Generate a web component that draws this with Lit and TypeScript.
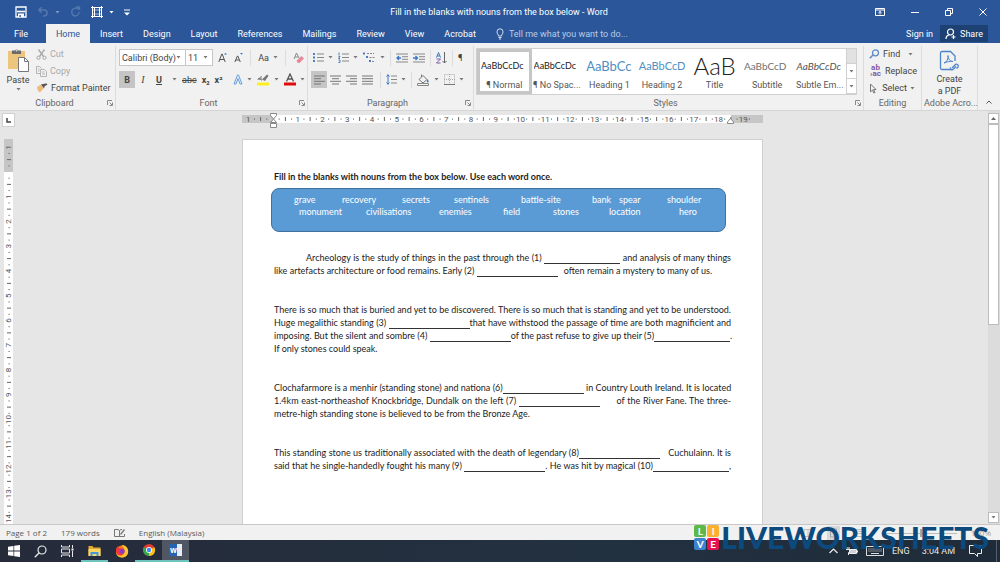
import { LitElement, html, svg, css } from "lit";
import { customElement } from "lit/decorators.js";
import { classMap } from "lit/directives/class-map.js";

const caret = html`<svg class="caret" viewBox="0 0 5 3" width="5" height="3"><path d="M.500 0h4L2.500 2.500z" fill="#777" /></svg>`;
const launcher = html`<svg viewBox="0 0 6 6" width="6" height="6" fill="none" stroke="#888"><path d="M.5 5V.5H5M2.5 2.5L5 5M5.5 2.5v3h-3" /></svg>`;

const icon = (w: number, h: number, body: unknown) =>
  html`<svg viewBox="0 0 ${w} ${h}" width=${w} height=${h} fill="none" aria-hidden="true">${body}</svg>`;

const icons = {
  save: icon(12, 12, svg`<path d="M1 1h10v10H1z" stroke="#fff" stroke-width="1.3"/><path d="M2 5.5h8" stroke="#fff" stroke-width="1.6"/><path d="M3 7.5h6V11H3z" fill="#fff"/><path d="M4.4 9h1.4v2H4.4z" fill="#2b579a"/>`),
  undo: icon(12, 12, svg`<path d="M2 4h5a3 3 0 010 6H6M4.600 1.200L1.800 4l2.800 2.800" stroke="#5577ae" stroke-width="1.500"/>`),
  redo: icon(11, 12, svg`<path d="M8.500 3.200A4 4 0 105 10a4 4 0 004-4M6.500 1h3v3" stroke="#5577ae" stroke-width="1.400"/>`),
  frame: icon(12, 12, svg`<path d="M0 1.500h12M0 10.500h12M1.500 0v12M10.500 0v12M3.500 1v10M8.500 1v10" stroke="#fff"/><path d="M2 4h8M2 8h8" stroke="#fff" stroke-opacity=".6"/>`),
  more: icon(6, 7, svg`<path d="M0 1h6" stroke="#fff"/><path d="M0 3.500h6L3 6.500z" fill="#fff"/>`),
  display: icon(10, 8, svg`<path d="M.5.5h9v7h-9zM.5 2h9M5 6.500V3.500M3.500 4.800L5 3.400l1.500 1.400" stroke="#fff"/>`),
  min: icon(8, 8, svg`<path d="M0 4.500h8" stroke="#fff"/>`),
  restore: icon(8, 8, svg`<path d="M.5 2.500h5v5h-5zM2.500 2.500v-2h5v5h-2" stroke="#fff"/>`),
  close: icon(8, 8, svg`<path d="M.5.500l7 7M7.500.500l-7 7" stroke="#fff"/>`),
  bulb: icon(8, 12, svg`<path d="M2.500 8C2.500 6.500 1 6 1 3.800a3 3 0 016 0C7 6 5.500 6.500 5.500 8zM2.500 9.500h3M3 11h2" stroke="#d5e0f1"/>`),
  person: icon(11, 12, svg`<circle cx="5.500" cy="4" r="3" stroke="#fff" stroke-width="1.200"/><path d="M1 11c0-2.500 1.500-4 3.500-4M8.500 7v4M6.500 9h4" stroke="#fff" stroke-width="1.200"/>`),
  paste: icon(22, 23, svg`<path d="M1 2h17v18H1z" fill="#edc57d"/><path d="M5 1.500h3a1.700 1.700 0 013 0h3V5H5z" fill="#6b6b6b"/><circle cx="9.500" cy="1.800" r=".8" fill="#f1f1f1"/><path d="M11.500 8.500h6l4 4v10h-10z" fill="#fff" stroke="#777"/><path d="M17.500 8.500v4h4" stroke="#777"/>`),
  cut: icon(11, 11, svg`<path d="M2.500.500l5 7M8.500.500l-5 7" stroke="#a8a8a8" stroke-width="1.300"/><circle cx="2.500" cy="8.800" r="1.600" stroke="#a8a8a8"/><circle cx="8.500" cy="8.800" r="1.600" stroke="#a8a8a8"/>`),
  copy: icon(11, 11, svg`<path d="M4 7.500H.5v-7h3l2 2M4.500 3.500h4l2 2v5h-6zM2 3h1.500M2 5h1.500M6 6h2.500M6 8h3" stroke="#b5b5b5"/>`),
  brush: icon(12, 10, svg`<path d="M1 4l4-2.500 2.500 4L4 9.500C2 8.500 1 6.500 1 4z" fill="#eebb79"/><path d="M5 1.500L9.500.500 8 5.500z" fill="#555"/><path d="M8 2.500l3-1.500" stroke="#555" stroke-width="1.600"/>`),
  grow: icon(9, 11, svg`<path d="M.8 10L3.800 2h.4l3 8M1.900 7.500h4.200" stroke="#555"/><path d="M6 2.500L7.500.800 9 2.500z" fill="#3b78c3"/>`),
  shrink: icon(9, 11, svg`<path d="M.8 10L3.400 4h.4l2.500 6M1.900 8h3.400" stroke="#555"/><path d="M6 1L7.500 2.700 9 1z" fill="#3b78c3"/>`),
  eraser: icon(11, 12, svg`<path d="M1 7l2.500-6L6 6M2 5h3" stroke="#8b8b8b"/><path d="M3.500 8.500L8.500 4 11 6.500 6.500 11H4.800z" fill="#e9899d"/>`),
  outlineA: icon(10, 11, svg`<path d="M1 10L4.500 1h1L9 10H7L5 4.500 3 10z" stroke="#6aa0d8" fill="#e8f2fc"/>`),
  marker: icon(13, 13, svg`<path d="M5 6.500l5-5 1.500 1.200L8 8z" fill="#777"/><path d="M1 7c0-2 2-2 2 0V4.500M1 5.500h2M4 3v4h1" stroke="#777"/><path d="M0 9.500h12v3H0z" fill="#ffee1e"/>`),
  fontA: icon(12, 13, svg`<path d="M2.500 8.500L6 1l3.500 7.500M3.600 6h4.800" stroke="#555" stroke-width="1.300"/><path d="M0 9.500h12v3H0z" fill="#e00b0b"/>`),
  bullets: icon(11, 11, svg`<path d="M0 1h2v2H0zM0 4.500h2v2H0zM0 8h2v2H0z" fill="#4a7ebd"/><path d="M4 2h7M4 5.500h7M4 9h7" stroke="#888"/>`),
  numbers: icon(11, 11, svg`<path d="M1 .5v3M.5 4.500H2L.5 6.500H2M.5 8H2v2.500H.5" stroke="#4a7ebd"/><path d="M4 2h7M4 5.500h7M4 9h7" stroke="#888"/>`),
  levels: icon(13, 11, svg`<path d="M0 .500h2v2H0zM3 4h2v2H3zM6 8h2v2H6z" fill="#4a7ebd"/><path d="M4 1.500h7M6.500 5.500h5M9 9.500h3" stroke="#888" stroke-dasharray="2 1"/>`),
  outdent: icon(12, 10, svg`<path d="M0 1h12M6 3.700h6M6 6.300h6M0 9h12" stroke="#888"/><path d="M5 5H1M3 3L1 5l2 2" stroke="#3b78c3" stroke-width="1.300"/>`),
  indent: icon(12, 10, svg`<path d="M0 1h12M6 3.700h6M6 6.300h6M0 9h12" stroke="#888"/><path d="M0 5h4M2.500 3l2 2-2 2" stroke="#3b78c3" stroke-width="1.300"/>`),
  sort: icon(11, 12, svg`<path d="M.5 5.500L2.500.500l2 5M1.200 4h2.500" stroke="#3b78c3"/><path d="M.500 7h4l-4 4h4" stroke="#7a5ba6"/><path d="M8.500 0v11M6.500 9l2 2 2-2" stroke="#666"/>`),
  left: icon(11, 10, svg`<path d="M0 1h11M0 3.700h7M0 6.300h11M0 9h7" stroke="#777"/>`),
  center: icon(11, 10, svg`<path d="M0 1h11M2 3.700h7M0 6.300h11M2 9h7" stroke="#777"/>`),
  right: icon(11, 10, svg`<path d="M0 1h11M4 3.700h7M0 6.300h11M4 9h7" stroke="#777"/>`),
  justify: icon(11, 10, svg`<path d="M0 1h11M0 3.700h11M0 6.300h11M0 9h11" stroke="#777"/>`),
  spacing: icon(11, 11, svg`<path d="M2 .5v10M.5 2.500L2 .800l1.500 1.700M.5 8.500L2 10.200l1.500-1.700" stroke="#3b78c3"/><path d="M5 2h6M5 5.500h6M5 9h6" stroke="#888"/>`),
  bucket: icon(13, 12, svg`<path d="M2 5.500L6 1.500l4 4-4 3.500zM4.500 3V.500" stroke="#777"/><path d="M10.500 5c1.500 2 1.500 3.500.3 3.500S9.500 7 10.500 5z" fill="#3b78c3"/><path d="M.5 9.500h11v2H.5z" stroke="#888"/>`),
  borders: icon(11, 11, svg`<path d="M.5.500h10v10H.5zM5.500 0v11M0 5.500h11" stroke="#aaa" stroke-dasharray="1 1"/><path d="M0 10.500h11" stroke="#777"/>`),
  find: icon(11, 10, svg`<circle cx="6.500" cy="3.800" r="3" stroke="#5f8ac4" stroke-width="1.300"/><path d="M4 6L.8 9.200" stroke="#5f8ac4" stroke-width="1.600"/>`),
  arrow: icon(8, 11, svg`<path d="M1.500 1l5.500 5.500H4.500L6 9.500l-1.200.500L3.500 7 1.500 8.800z" stroke="#777"/>`),
  pdf: icon(21, 22, svg`<path d="M12 19.500H3a1.500 1.500 0 01-1.500-1.500V3A1.500 1.500 0 013 1.500h8.500L16 6v5" stroke="#4c84c9" stroke-width="1.300"/><path d="M5 13c3-1 4.500-4.500 4-7.500 0 3.500 2 6 5 6-3-.500-6.500.500-9 1.500z" stroke="#4c84c9"/><path d="M12 17l3-3a1.700 1.700 0 013 2l-1.500 1.500M16 15.500l-3 3a1.700 1.700 0 01-2.500-2" transform="translate(1 1)" stroke="#4c84c9" stroke-width="1.300"/>`),
  proof: icon(11, 10, svg`<path d="M5 8.500H.5v-7H4l1.500 1V9M5.500 2.500L7 1.500h1M6 8.500h4.500V6" stroke="#777"/><path d="M6.500 6.500l4-5" stroke="#777" stroke-width="1.300"/>`),
  views: icon(160, 14, svg`<path d="M1 3.500h8v7H1zM5 3.500v7M53.500 3.500h9v7h-9zM55 5.500h6M55 7.500h6" stroke="#999"/><path d="M24 0h13v14H24z" fill="#c6c6c6"/><path d="M27.500 3h6v8h-6z" stroke="#777"/><path d="M82 7.500h72" stroke="#999"/><path d="M117 3h2v8h-2z" fill="#777"/>`),
  start: icon(12, 12, svg`<path d="M0 1.700L5.500.900v4.700H0zM6.200.800L12 0v5.600H6.200zM0 6.400h5.500v4.700L0 10.300zM6.200 6.400H12V12l-5.800-.800z" fill="#fff"/>`),
  search: icon(13, 13, svg`<circle cx="8" cy="5" r="4" stroke="#e8e8e8" stroke-width="1.200"/><path d="M5.200 7.800L.8 12.200" stroke="#e8e8e8" stroke-width="1.400"/>`),
  tasks: icon(13, 12, svg`<path d="M.5 0v2h8V0M.5 12v-2h8v2M.5 4h8v4h-8z" stroke="#e8e8e8"/><path d="M11.500 0v3M11.500 6v6" stroke="#e8e8e8"/><path d="M10.500 3.500h2v2h-2z" fill="#fff"/>`),
  explorer: icon(13, 11, svg`<path d="M.5 1h4l1 1.500H12.500V11H.5z" fill="#e7a92b"/><path d="M.5 4h12v7H.5z" fill="#fbd667"/><path d="M2.500 11V7h8v4h-2V9h-4v2z" fill="#4595dc"/>`),
  firefox: icon(14, 14, svg`<circle cx="7" cy="7.500" r="6" fill="#ff7a18"/><path d="M7 1.500c-1-.500 3-1.500 5.500 3 2 4-.500 9-5.500 9-4 0-6-3-6-6 1 3 4 4.500 6.500 3.500 3-1.500 3-6-.500-9.500z" fill="#ffc62e"/><circle cx="6.800" cy="7.200" r="2.800" fill="#8a3bc4"/><path d="M1 7c0-3 1-4 2-5l1 2 2.500.500L4.500 6.500 5 9l3 1.500C5 13 1 11 1 7z" fill="#f8333d"/>`),
  chrome: icon(14, 14, svg`<circle cx="7" cy="7" r="6" fill="#e33b2e"/><path d="M7 7l5.400-2.800A6 6 0 017 13z" fill="#fbc116"/><path d="M7 7v6A6 6 0 011.700 4.200z" fill="#2da94f"/><circle cx="7" cy="7" r="3" fill="#fff"/><circle cx="7" cy="7" r="2.200" fill="#4285f4"/>`),
  up: icon(9, 6, svg`<path d="M.5 5l4-4 4 4" stroke="#eee" stroke-width="1.200"/>`),
  battery: icon(12, 8, svg`<path d="M3.500 2.500h7v4h-7z" stroke="#eee" fill="#cfd3d8"/><path d="M11 3.500h1v2h-1z" fill="#eee"/><path d="M1 0v2M3 0v2M0 2.500h4V4L2.500 5.500V8" stroke="#eee"/>`),
  keyboard: icon(18, 10, svg`<path d="M.5.500h17v9H.5z" stroke="#ddd"/><path d="M2.500 3h13M2.500 5h13" stroke="#ddd" stroke-dasharray="1 1"/><path d="M5 7.500h8" stroke="#ddd"/>`),
  note: icon(13, 12, svg`<path d="M.500 .500h12v8H8.500v3L5.500 8.500h-5z" stroke="#eee"/>`),
};

@customElement("app-root")
export class AppRoot extends LitElement {
  static styles = css`
    :host { display: flex; flex-direction: column; position: relative; height: 100vh; overflow: hidden; font: 9px/12px Roboto, "Open Sans", sans-serif; color: #444; background: #e6e6e6; }
    * { box-sizing: border-box; }
    svg { display: block; flex: none; }
    button, select, input { font: inherit; color: inherit; border: 0; background: none; margin: 0; padding: 0; border-radius: 0; }
    button { display: flex; align-items: center; justify-content: center; white-space: nowrap; }
    .title { display: grid; grid-template-columns: 1fr auto 1fr; align-items: center; height: 24px; flex: none; background: #2b579a; color: #fff; padding-right: 2px; }
    .quick { display: flex; align-items: center; padding-left: 15px; gap: 10px; }
    .quick .pair { gap: 6px; }
    .quick .caret path { fill: #fff; }
    .dim { opacity: .4; }
    .window { display: flex; justify-content: flex-end; gap: 26px; padding-right: 11px; }
    .tabs { display: flex; align-items: stretch; height: 19px; flex: none; background: #2b579a; color: #fff; padding-right: 12px; }
    .tabs button { padding: 0 10px; }
    .tabs .file { width: 46px; padding: 0 4px 0 0; }
    .tabs .active { background: #f1f1f1; color: #2b579a; width: 44px; }
    .tabs .tell { color: #b9cbe6; gap: 5px; }
    .tabs .push { margin-left: auto; padding: 0 7px; }
    .tabs .share { background: #1e4173; padding: 0 5px; gap: 4px; margin: 1px 0; }
    .ribbon { display: flex; height: 68px; flex: none; background: #f1f1f1; border-bottom: 1px solid #d5d5d5; padding-top: 3px; }
    .group { display: flex; flex-direction: column; border-right: 1px solid #dcdcdc; flex: none; }
    .body { flex: 1; display: flex; }
    .rows { flex-direction: column; padding: 3px 3px 0; gap: 5px; }
    .row { display: flex; align-items: center; height: 17px; gap: 5px; }
    .foot { display: flex; align-items: center; height: 13px; color: #666; padding: 0 2px 2px; }
    .foot span { flex: 1; text-align: center; white-space: nowrap; }
    .clip { width: 116px; }
    .font { width: 192px; }
    .para { width: 166px; }
    .styles { flex: 1 1 0; min-width: 0; }
    .edit { width: 58px; }
    .adobe { width: 56px; }
    .paste { flex-direction: column; justify-content: flex-start; width: 36px; gap: 2px; padding-top: 3px; }
    .list { display: flex; flex-direction: column; gap: 5px; padding-top: 2px; align-items: flex-start; }
    .edit .list { padding-left: 5px; }
    .list button { gap: 3px; height: 12px; }
    .off { color: #a8a8a8; }
    .combo { display: flex; align-items: center; height: 17px; background: #fff; border: 1px solid #c6c6c6; padding: 0 4px 0 2px; }
    .combo select { appearance: none; flex: 1; min-width: 0; height: 15px; }
    .family { width: 69px; }
    .size { width: 31px; margin-left: -6px; }
    .pair { gap: 4px; }
    .sep { width: 1px; height: 16px; background: #dcdcdc; }
    .wide { gap: 7px; }
    .lists { padding-left: 2px; }
    .tools { display: flex; }
    .tool { width: 16px; height: 17px; }
    .on { background: #c5c5c5; }
    .b { font-weight: 700; }
    .i { font: italic 10px "Liberation Serif", serif; }
    .u { text-decoration: underline; font-weight: 700; }
    .s { text-decoration: line-through; }
    .gallery { display: flex; flex: 1; margin: 2px 6px 2px 2px; background: #fff; border: 1px solid #d0d0d0; min-width: 0; }
    .style { flex: 1 1 0; min-width: 0; flex-direction: column; justify-content: flex-end; overflow: hidden; padding: 0 3px 3px; color: #555; }
    .style.chosen { border: 3px solid #c6c6c6; padding: 0 1px; margin-right: -1px; }
    .sample { display: flex; align-items: center; justify-content: flex-start; height: 26px; width: 100%; overflow: hidden; color: #222; font-family: Lato, sans-serif; font-size: 9px; line-height: 26px; }
    .h1 { color: #4f8fc4; font-size: 13px; }
    .h2 { color: #4f8fc4; font-size: 11px; }
    .big { font-size: 24px; font-weight: 300; justify-content: center; }
    .sub { color: #707070; font-size: 10px; }
    .em { color: #555; font-style: italic; font-size: 10px; }
    .scroller { display: flex; flex-direction: column; width: 10px; border-left: 1px solid #d0d0d0; flex: none; }
    .scroller button { flex: 1; border-bottom: 1px solid #d0d0d0; }
    .scroller .none { background: #e1e1e1; }
    .swap { color: #8058a0; font-weight: 700; font-size: 8px; line-height: 6px; display: block; width: 13px; }
    .pdf { flex-direction: column; justify-content: flex-start; gap: 1px; width: 100%; padding-top: 4px; }
    .collapse { flex: none; width: 22px; align-self: flex-end; height: 16px; }
    .work { flex: 1; display: flex; min-height: 0; overflow: hidden; }
    .side { width: 18px; flex: none; overflow: hidden; padding: 2px 0 0 2px; }
    .tabstop { width: 13px; height: 14px; background: #fff; border: 1px solid #d0d0d0; }
    .side .vr { margin: 12px 0 0 2px; }
    .canvas { flex: 1; display: flex; flex-direction: column; align-items: center; overflow: hidden; padding: 2px 1px 0 0; }
    .page { width: 521px; flex: 1 0 auto; margin-top: 11px; background: #fff; border: 1px solid #cfcfcf; border-bottom: 0; padding: 30px 31px 0; font: 9px/13px Lato, sans-serif; color: #1c1c1c; }
    .page h1 { margin: 0; font: inherit; font-weight: 700; }
    .bank { height: 44px; margin: 5px 5px 19px -3px; background: #5b9bd5; border: 1px solid #41719c; border-radius: 8px; color: #fff; padding: 5px 0 0 22px; line-height: 12px; }
    .words { display: grid; white-space: nowrap; }
    .w1 { grid-template-columns: 48px 60px 52px 67px 71px 27px 48px auto; }
    .w2 { grid-template-columns: 67px 73px 64px 50px 56px 70px auto; padding-left: 5px; }
    .text { margin: 0 0 26px; }
    .line { display: block; height: 13px; white-space: nowrap; text-align: justify; text-align-last: justify; }
    .line.last { text-align-last: left; }
    .line.first { padding-left: 32px; }
    .blank { width: 81px; height: 11px; border-bottom: 1px solid #333; vertical-align: baseline; }
    .tight { width: 76px; }
    .far { margin-right: 14px; }
    .near { margin-right: 6px; }
    .bar { width: 12px; flex: none; display: flex; flex-direction: column; background: #dcdcdc; padding: 2px 1px 1px 0; }
    .bar button { height: 11px; background: #fff; border: 1px solid #bdbdbd; flex: none; }
    .thumb { background: #fff; border: 1px solid #bdbdbd; height: 49%; }
    .bar .end { margin-top: auto; }
    .status { display: flex; align-items: center; height: 16px; flex: none; background: #f1f1f1; border-top: 1px solid #c8c8c8; color: #5a5a5a; padding: 0 9px 0 6px; gap: 14px; font: 8px/12px "Open Sans", sans-serif; }
    .zoom { margin-left: auto; display: flex; align-items: center; gap: 8px; opacity: .6; }
    .task { display: flex; align-items: stretch; height: 22px; flex: none; background: linear-gradient(90deg, #262b3a, #223140 60%, #1f2b39); color: #e6e6e6; padding-right: 3px; }
    .task button { width: 27px; }
    .task .run { border-bottom: 2px solid #6fc3bd; }
    .task .front { background: #505662; }
    .task .word { width: 13px; height: 12px; background: linear-gradient(90deg, #2563b4 62%, #e4edf8 62%); color: #fff; font: 700 8px/12px "Open Sans", sans-serif; text-align: left; padding-left: 1px; }
    .tray { margin-left: auto; display: flex; align-items: center; gap: 8px; border-right: 1px solid #56606c; padding-right: 14px; }
    .tray .clock { margin: 0 6px 0 4px; }
    .mark { position: absolute; right: 11px; bottom: 12px; display: flex; align-items: center; gap: 2px; pointer-events: none; }
    .tiles { display: grid; grid-template-columns: 12px 12px; grid-auto-rows: 12px; gap: 1px; font: 700 10px/12px Lato, sans-serif; color: #fff; text-align: center; }
    .tile { border-radius: 2px; }
    .green { background: #5cb947; } .yellow { background: #fbb12f; } .blue { background: #3b82d0; } .red { background: #e6124f; }
    .name { font: 900 30px/26px Lato, sans-serif; color: #0c4a7d; }
  `;

  private horizontalRuler() {
    const unit = 24.75, zero = 31;
    const marks = [-1, ...Array.from({ length: 19 }, (_, i) => i + 1)];
    return html`<svg viewBox="0 0 521 15" width="521" height="15" font-size="8" fill="#555">
      <path d="M0 2h521v8H0z" fill="#fff" /><path d="M0 2h31v8H0zM489 2h32v8h-32z" fill="#c6c6c6" />
      ${marks.map((n) => svg`<text x=${zero + n * unit} y="9" text-anchor="middle">${Math.abs(n)}</text>`)}
      ${Array.from({ length: 83 }, (_, i) => i - 5).filter((q) => q % 4 !== 0).map((q) => {
        const x = zero + (q * unit) / 4;
        if (x < 2 || x > 519) return null;
        return svg`<path d=${q % 2 === 0 ? `M${x} 4v4` : `M${x} 5.500v1.200`} stroke="#666" />`;
      })}
      <path d="M28.500.500h6v2l-3 3.500 3 3.500h-6l3-3.500-3-3.500zM28.500 10.500h6v4h-6zM485.500 10.500v-1.500l3-3.500 3 3.500v1.500z" fill="#fff" stroke="#888" />
    </svg>`;
  }

  private verticalRuler() {
    const unit = 24.75, zero = 33;
    return html`<svg class="vr" viewBox="0 0 9 400" width="9" height="400" font-size="8" fill="#555">
      <path d="M0 0h9v400H0z" fill="#fff" /><path d="M0 0h9v33H0z" fill="#c6c6c6" />
      ${Array.from({ length: 16 }, (_, i) => i - 1).filter((n) => n !== 0).map((n) => svg`<text transform="translate(7 ${zero + n * unit}) rotate(-90)" text-anchor="middle">${Math.abs(n)}</text>`)}
      ${Array.from({ length: 63 }, (_, i) => i - 3).filter((q) => q % 4 !== 0).map((q) => {
        const y = zero + (q * unit) / 4;
        return svg`<path d=${q % 2 === 0 ? `M3 ${y}h4` : `M4.500 ${y}h1.200`} stroke="#666" />`;
      })}
    </svg>`;
  }

  private blank(n: number, extra = "") {
    return html`<input class="blank ${extra}" type="text" aria-label="Blank ${n}" />`;
  }

  private quickStyle(sample: string, name: string, kind = "", chosen = false) {
    return html`<button class=${classMap({ style: true, chosen })}><span class="sample ${kind}">${sample}</span><span>${name}</span></button>`;
  }

  render() {
    const tabs = ["Insert", "Design", "Layout", "References", "Mailings", "Review", "View", "Acrobat"];
    return html`
      <header class="title">
        <div class="quick">
          <button aria-label="Save">${icons.save}</button>
          <button class="pair" aria-label="Undo">${icons.undo}<span class="dim">${caret}</span></button>
          <button aria-label="Redo">${icons.redo}</button>
          <button class="pair" aria-label="Layout frame">${icons.frame}${caret}</button>
          <button aria-label="Customize">${icons.more}</button>
        </div>
        <span>Fill in the blanks with nouns from the box below - Word</span>
        <div class="window">
          <button aria-label="Ribbon display">${icons.display}</button><button aria-label="Minimize">${icons.min}</button>
          <button aria-label="Restore">${icons.restore}</button><button aria-label="Close">${icons.close}</button>
        </div>
      </header>
      <nav class="tabs">
        <button class="file">File</button><button class="active">Home</button>
        ${tabs.map((t) => html`<button>${t}</button>`)}
        <button class="tell">${icons.bulb}Tell me what you want to do...</button>
        <button class="push">Sign in</button><button class="share">${icons.person}Share</button>
      </nav>
      <section class="ribbon">
        <div class="group clip">
          <div class="body">
            <button class="paste">${icons.paste}<span>Paste</span>${caret}</button>
            <div class="list">
              <button class="off">${icons.cut}Cut</button><button class="off">${icons.copy}Copy</button><button>${icons.brush}Format Painter</button>
            </div>
          </div>
          <div class="foot"><span>Clipboard</span>${launcher}</div>
        </div>
        <div class="group font">
          <div class="body rows">
            <div class="row">
              <label class="combo family"><select aria-label="Font"><option>Calibri (Body)</option></select>${caret}</label>
              <label class="combo size"><select aria-label="Font size"><option>11</option></select>${caret}</label>
              <div class="row wide">
                <button aria-label="Grow font">${icons.grow}</button><button aria-label="Shrink font">${icons.shrink}</button>
                <i class="sep"></i><button class="pair">Aa ${caret}</button><i class="sep"></i><button aria-label="Clear formatting">${icons.eraser}</button>
              </div>
            </div>
            <div class="row">
              <div class="tools"><button class="tool on b">B</button><button class="tool i">I</button><button class="tool u">U</button></div>${caret}
              <button class="s">abc</button><button class="b">x₂</button><button class="b">x²</button><i class="sep"></i>
              <button class="pair" aria-label="Text effects">${icons.outlineA}${caret}</button>
              <button class="pair" aria-label="Highlight">${icons.marker}${caret}</button>
              <button class="pair" aria-label="Font colour">${icons.fontA}${caret}</button>
            </div>
          </div>
          <div class="foot"><span>Font</span>${launcher}</div>
        </div>
        <div class="group para">
          <div class="body rows">
            <div class="row lists">
              <button class="pair" aria-label="Bullets">${icons.bullets}${caret}</button><button class="pair" aria-label="Numbering">${icons.numbers}${caret}</button>
              <button class="pair" aria-label="Multilevel list">${icons.levels}${caret}</button><i class="sep"></i>
              <button aria-label="Decrease indent">${icons.outdent}</button><button aria-label="Increase indent">${icons.indent}</button><i class="sep"></i>
              <button aria-label="Sort">${icons.sort}</button><i class="sep"></i><button>¶</button>
            </div>
            <div class="row">
              <div class="tools">
                <button class="tool on" aria-label="Align left">${icons.left}</button><button class="tool" aria-label="Center">${icons.center}</button>
                <button class="tool" aria-label="Align right">${icons.right}</button><button class="tool" aria-label="Justify">${icons.justify}</button>
              </div><i class="sep"></i>
              <button class="pair" aria-label="Line spacing">${icons.spacing}${caret}</button><i class="sep"></i>
              <button class="pair" aria-label="Shading">${icons.bucket}${caret}</button><button class="pair" aria-label="Borders">${icons.borders}${caret}</button>
            </div>
          </div>
          <div class="foot"><span>Paragraph</span>${launcher}</div>
        </div>
        <div class="group styles">
          <div class="body">
            <div class="gallery">
              ${this.quickStyle("AaBbCcDc", "¶ Normal", "", true)}${this.quickStyle("AaBbCcDc", "¶ No Spac...")}
              ${this.quickStyle("AaBbCc", "Heading 1", "h1")}${this.quickStyle("AaBbCcD", "Heading 2", "h2")}
              ${this.quickStyle("AaB", "Title", "big")}${this.quickStyle("AaBbCcD", "Subtitle", "sub")}${this.quickStyle("AaBbCcDc", "Subtle Em...", "em")}
              <div class="scroller"><button class="none" aria-label="Previous styles"></button><button aria-label="Next styles">${caret}</button><button aria-label="All styles">${caret}</button></div>
            </div>
          </div>
          <div class="foot"><span>Styles</span>${launcher}</div>
        </div>
        <div class="group edit">
          <div class="body"><div class="list">
            <button>${icons.find}Find &nbsp; ${caret}</button>
            <button><span class="swap">ab<br />›ac</span>Replace</button>
            <button>${icons.arrow}&nbsp;Select${caret}</button>
          </div></div>
          <div class="foot"><span>Editing</span></div>
        </div>
        <div class="group adobe">
          <div class="body"><button class="pdf">${icons.pdf}<span>Create<br />a PDF</span></button></div>
          <div class="foot"><span>Adobe Acro...</span></div>
        </div>
        <button class="collapse" aria-label="Collapse ribbon"><svg viewBox="0 0 6 4" width="6" height="4" fill="none" stroke="#555"><path d="M.5 3.500L3 1l2.500 2.500" /></svg></button>
      </section>
      <main class="work">
        <div class="side">
          <div class="tabstop"><svg viewBox="0 0 11 12" width="11" height="12" fill="none" stroke="#444" stroke-width="1.500"><path d="M4 4v4h4" /></svg></div>
          ${this.verticalRuler()}
        </div>
        <div class="canvas">
          ${this.horizontalRuler()}
          <article class="page">
            <h1>Fill in the blanks with nouns from the box below. Use each word once.</h1>
            <div class="bank">
              <div class="words w1">${["grave", "recovery", "secrets", "sentinels", "battle-site", "bank", "spear", "shoulder"].map((w) => html`<span>${w}</span>`)}</div>
              <div class="words w2">${["monument", "civilisations", "enemies", "field", "stones", "location", "hero"].map((w) => html`<span>${w}</span>`)}</div>
            </div>
            <p class="text">
              <span class="line first">Archeology is the study of things in the past through the (1) ${this.blank(1, "tight")} and analysis of many things</span>
              <span class="line last">like artefacts architecture or food remains. Early (2) ${this.blank(2, "near")}often remain a mystery to many of us.</span>
            </p>
            <p class="text">
              <span class="line">There is so much that is buried and yet to be discovered. There is so much that is standing and yet to be understood.</span>
              <span class="line">Huge megalithic standing (3) ${this.blank(3)}that have withstood the passage of time are both magnificient and</span>
              <span class="line">imposing. But the silent and sombre (4) ${this.blank(4)}of the past refuse to give up their (5)${this.blank(5, "tight")}.</span>
              <span class="line last">If only stones could speak.</span>
            </p>
            <p class="text">
              <span class="line">Clochafarmore is a menhir (standing stone) and nationa (6)${this.blank(6)} in Country Louth Ireland. It is located</span>
              <span class="line">1.4km east-northeashof Knockbridge, Dundalk on the left (7) ${this.blank(7, "far")} of the River Fane. The three-</span>
              <span class="line last">metre-high standing stone is believed to be from the Bronze Age.</span>
            </p>
            <p class="text">
              <span class="line">This standing stone us traditionally associated with the death of legendary (8)${this.blank(8, "near")} Cuchulainn. It is</span>
              <span class="line">said that he single-handedly fought his many (9) ${this.blank(9)}. He was hit by magical (10)${this.blank(10, "tight")},</span>
            </p>
          </article>
        </div>
        <div class="bar">
          <button aria-label="Scroll up"><svg viewBox="0 0 5 3" width="5" height="3"><path d="M0 3h5L2.500 0z" fill="#666" /></svg></button>
          <div class="thumb"></div>
          <button class="end" aria-label="Scroll down">${caret}</button>
        </div>
      </main>
      <footer class="status"><span>Page 1 of 2</span><span>179 words</span>${icons.proof}<span>English (Malaysia)</span><span class="zoom">${icons.views}100%</span></footer>
      <div class="task">
        <button aria-label="Start">${icons.start}</button><button aria-label="Search">${icons.search}</button><button aria-label="Task view">${icons.tasks}</button>
        <button class="run" aria-label="File Explorer">${icons.explorer}</button><button aria-label="Firefox">${icons.firefox}</button>
        <button class="run" aria-label="Chrome">${icons.chrome}</button><button class="run front" aria-label="Word"><span class="word">w</span></button>
        <div class="tray">${icons.up}${icons.battery}${icons.keyboard}<span>ENG</span><span class="clock">3:04 AM</span>${icons.note}</div>
      </div>
      <div class="mark">
        <div class="tiles"><span class="tile green">L</span><span class="tile yellow">I</span><span class="tile blue">V</span><span class="tile red">E</span></div>
        <span class="name">LIVEWORKSHEETS</span>
      </div>
    `;
  }
}
